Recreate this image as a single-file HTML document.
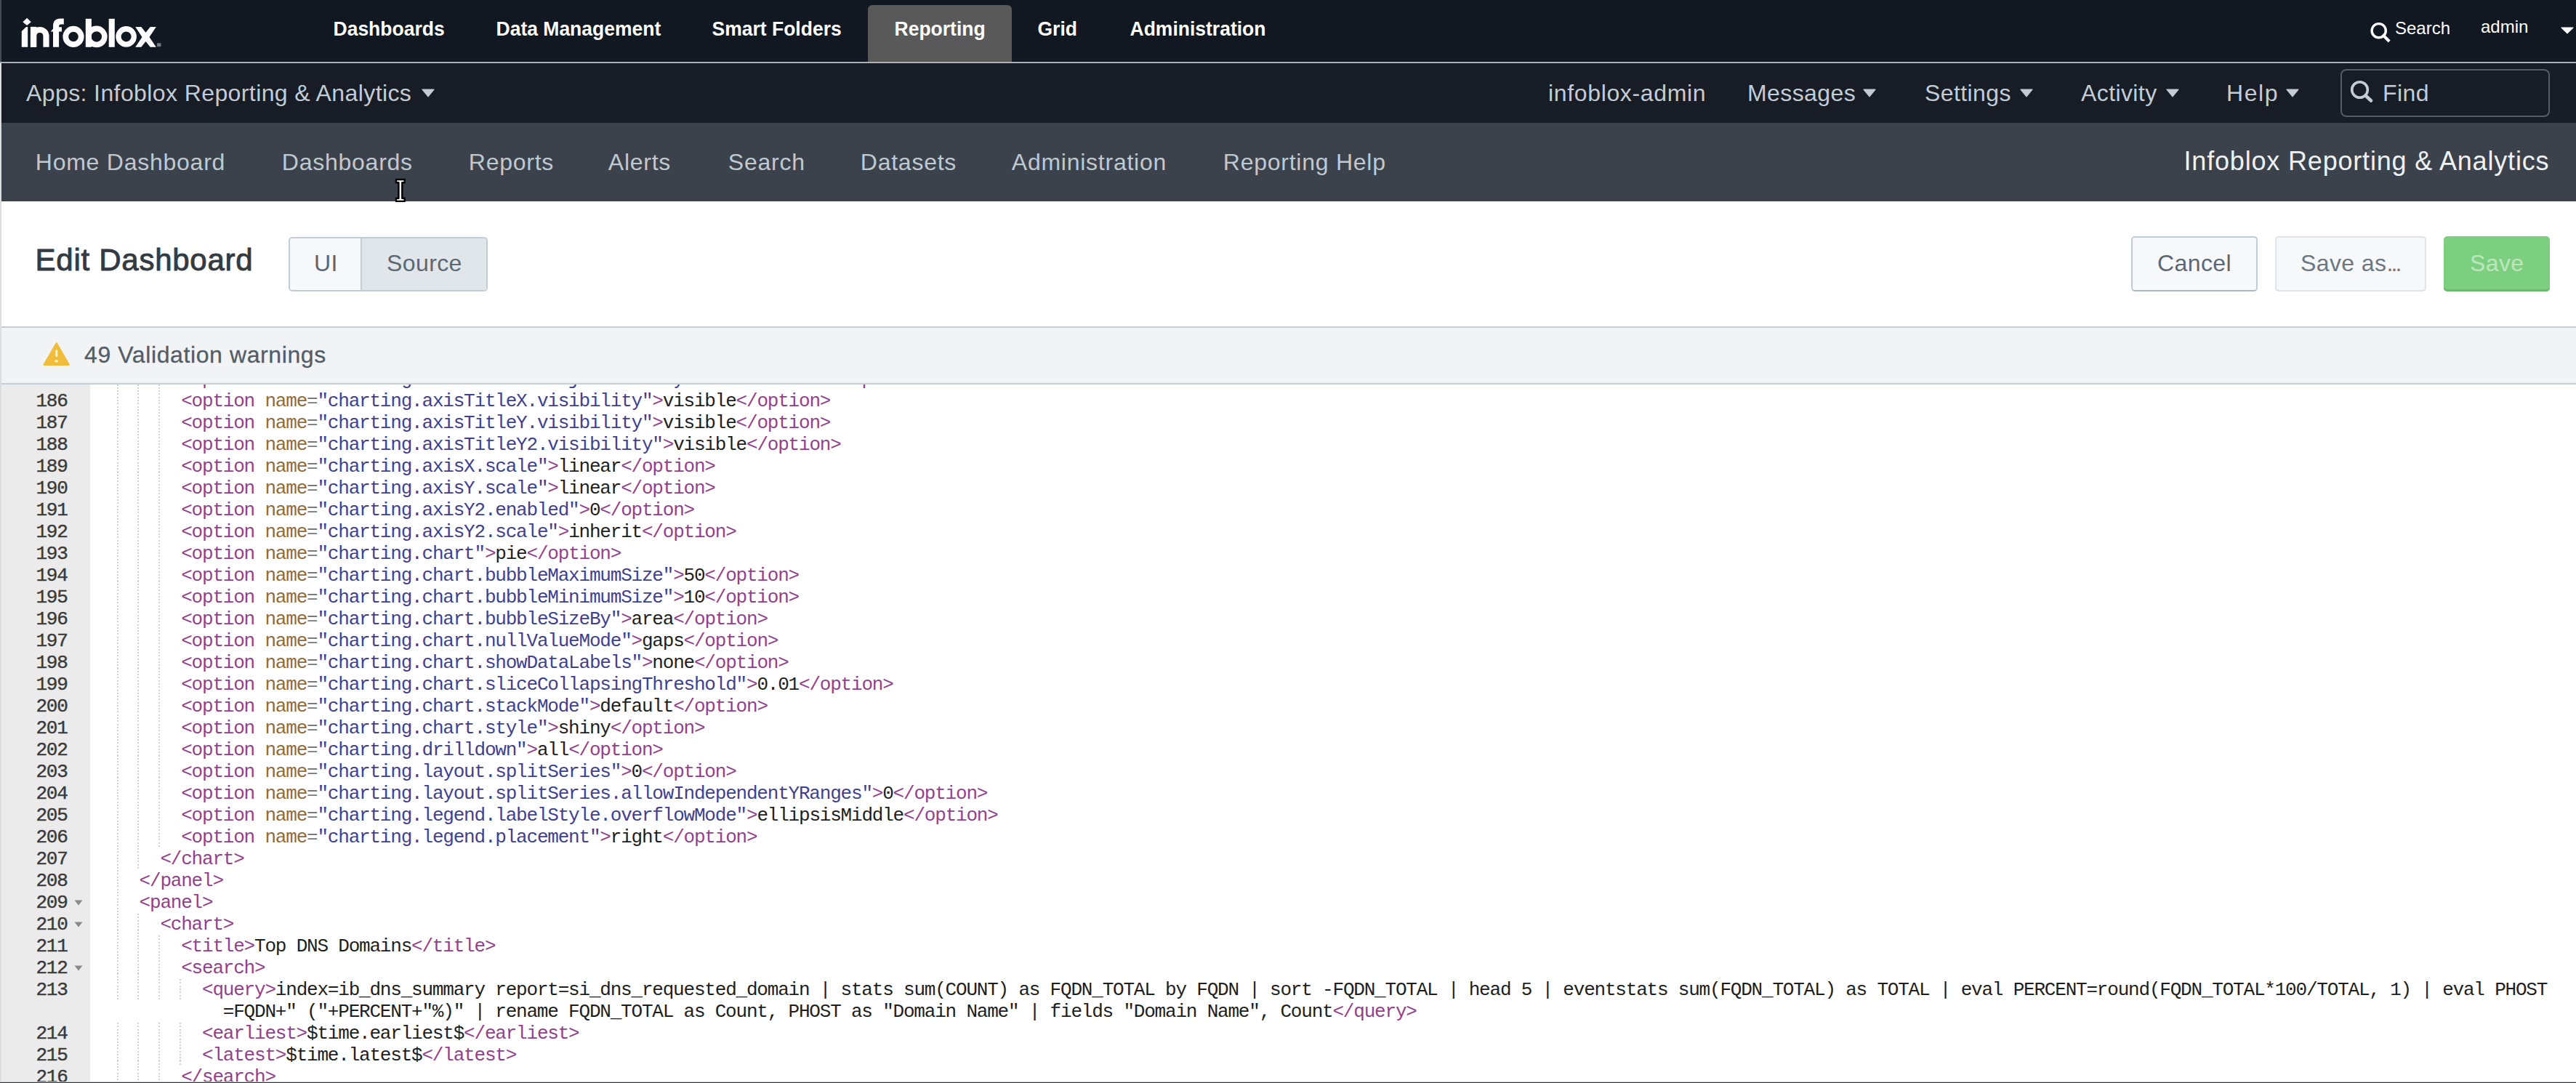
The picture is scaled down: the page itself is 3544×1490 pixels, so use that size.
<!DOCTYPE html>
<html><head><meta charset="utf-8">
<style>
html,body{margin:0;padding:0;}
body{width:3544px;height:1490px;position:relative;overflow:hidden;background:#fff;font-family:"Liberation Sans",sans-serif;}
.a{position:absolute;display:block;}
.t{position:absolute;white-space:pre;line-height:1;}
.g{width:2px;background:repeating-linear-gradient(to bottom,#d3d3d3 0,#d3d3d3 2px,transparent 2px,transparent 4.3px);}
.m{font-family:"Liberation Mono",monospace;}
</style></head><body>
<div class="a" style="left:0;top:0;width:3544px;height:85px;background:#111821"></div>
<div class="a" style="left:0;top:0;width:2px;height:85px;background:#454b52"></div>
<div class="a" style="left:0;top:85px;width:3544px;height:2px;background:#adb0b3"></div>
<div class="a" style="left:1194px;top:7px;width:198px;height:78px;background:#595959;border-radius:6px 6px 0 0"></div>
<div class="t" style="left:458.5px;top:26.57px;font-size:26.5px;color:#ffffff;font-weight:700;letter-spacing:0px;transform:scaleY(1.05);transform-origin:0 22.43px;">Dashboards</div>
<div class="t" style="left:682.5px;top:26.57px;font-size:26.5px;color:#ffffff;font-weight:700;letter-spacing:0px;transform:scaleY(1.05);transform-origin:0 22.43px;">Data Management</div>
<div class="t" style="left:979.5px;top:26.57px;font-size:26.5px;color:#ffffff;font-weight:700;letter-spacing:0px;transform:scaleY(1.05);transform-origin:0 22.43px;">Smart Folders</div>
<div class="t" style="left:1230.5px;top:26.57px;font-size:26.5px;color:#ffffff;font-weight:700;letter-spacing:0px;transform:scaleY(1.05);transform-origin:0 22.43px;">Reporting</div>
<div class="t" style="left:1427.5px;top:26.57px;font-size:26.5px;color:#ffffff;font-weight:700;letter-spacing:0px;transform:scaleY(1.05);transform-origin:0 22.43px;">Grid</div>
<div class="t" style="left:1554.5px;top:26.57px;font-size:26.5px;color:#ffffff;font-weight:700;letter-spacing:0px;transform:scaleY(1.05);transform-origin:0 22.43px;">Administration</div>
<svg class="a" style="left:0;top:0" width="230" height="80" viewBox="0 0 230 80"><g fill="#fcfcfc">
<path d="M37.1 24.8 L42.8 30.2 L37.1 35.0 L31.3 30.2 Z"/>
<path d="M29.8 43.1 L36.0 36.9 L38.2 36.9 L38.2 64.8 L29.8 64.8 Z"/>
<rect x="41.9" y="36.9" width="8.3" height="27.9"/>
<path d="M46.05 64.8 V49.1 A8.75 8.75 0 0 1 63.5 49.1 V64.8" fill="none" stroke="#fcfcfc" stroke-width="8.2"/>
<path d="M73.0 64.8 V36 C73.0 29 76.5 25.5 83 25.5 H87.8 V33.4 H84 C82 33.4 81.1 34.3 81.1 36.5 V64.8 Z"/>
<path d="M70 43.1 L75.2 37.3 L85 37.3 L85 43.6 L70 43.6 Z"/>
<circle cx="101" cy="50.45" r="10.7" fill="none" stroke="#fcfcfc" stroke-width="7.8"/>
<rect x="117.8" y="25.8" width="8.1" height="39"/>
<circle cx="132.8" cy="50.4" r="11.05" fill="none" stroke="#fcfcfc" stroke-width="7.6"/>
<rect x="149.7" y="25.8" width="8.1" height="39"/>
<circle cx="173.6" cy="50.4" r="10.65" fill="none" stroke="#fcfcfc" stroke-width="7.3"/>
<path d="M186.2 37.1 L194.3 37.1 L200.5 44.8 L206.7 37.1 L214.8 37.1 L205.5 50.9 L214.8 64.8 L206.7 64.8 L200.5 57.0 L194.3 64.8 L186.2 64.8 L195.5 50.9 Z"/>
</g><rect x="215.9" y="59.3" width="5.6" height="5" rx="1" fill="#74777b"/></svg>
<svg class="a" style="left:3258px;top:28px" width="34" height="32" viewBox="0 0 34 32"><circle cx="14.7" cy="14.2" r="9.6" fill="none" stroke="#fff" stroke-width="3.4"/><path d="M21.2 21 L27.8 27.6" stroke="#fff" stroke-width="4" stroke-linecap="square"/></svg>
<div class="t" style="left:3295px;top:26.68px;font-size:24px;color:#ffffff;font-weight:400;letter-spacing:0px;">Search</div>
<div class="t" style="left:3413px;top:25.18px;font-size:24px;color:#ffffff;font-weight:400;letter-spacing:0px;">admin</div>
<svg class="a" style="left:3522.5px;top:37px" width="18" height="9.5" viewBox="0 0 18 9.5"><path d="M1 1 L17 1 L9.0 8.8 Z" fill="#ffffff" stroke="#ffffff" stroke-width="1.2" stroke-linejoin="round"/></svg>
<div class="a" style="left:0;top:87px;width:3544px;height:82px;background:#181c24"></div>
<div class="t" style="left:36px;top:111.91px;font-size:32px;color:#c3ccd6;font-weight:400;letter-spacing:0.4px;">Apps: Infoblox Reporting &amp; Analytics</div>
<svg class="a" style="left:579.5px;top:122.3px" width="18" height="11.5" viewBox="0 0 18 11.5"><path d="M1 1 L17 1 L9.0 10.8 Z" fill="#c3ccd6" stroke="#c3ccd6" stroke-width="1.2" stroke-linejoin="round"/></svg>
<div class="t" style="left:2130px;top:111.91px;font-size:32px;color:#c3ccd6;font-weight:400;letter-spacing:0.65px;">infoblox-admin</div>
<div class="t" style="left:2404px;top:111.91px;font-size:32px;color:#c3ccd6;font-weight:400;letter-spacing:0.4px;">Messages</div>
<svg class="a" style="left:2563.3px;top:122.3px" width="18" height="11.5" viewBox="0 0 18 11.5"><path d="M1 1 L17 1 L9.0 10.8 Z" fill="#c3ccd6" stroke="#c3ccd6" stroke-width="1.2" stroke-linejoin="round"/></svg>
<div class="t" style="left:2648px;top:111.91px;font-size:32px;color:#c3ccd6;font-weight:400;letter-spacing:0.4px;">Settings</div>
<svg class="a" style="left:2779.3px;top:122.3px" width="18" height="11.5" viewBox="0 0 18 11.5"><path d="M1 1 L17 1 L9.0 10.8 Z" fill="#c3ccd6" stroke="#c3ccd6" stroke-width="1.2" stroke-linejoin="round"/></svg>
<div class="t" style="left:2863px;top:111.91px;font-size:32px;color:#c3ccd6;font-weight:400;letter-spacing:0.4px;">Activity</div>
<svg class="a" style="left:2980.3px;top:122.3px" width="18" height="11.5" viewBox="0 0 18 11.5"><path d="M1 1 L17 1 L9.0 10.8 Z" fill="#c3ccd6" stroke="#c3ccd6" stroke-width="1.2" stroke-linejoin="round"/></svg>
<div class="t" style="left:3063px;top:111.91px;font-size:32px;color:#c3ccd6;font-weight:400;letter-spacing:1.6px;">Help</div>
<svg class="a" style="left:3145.3px;top:122.3px" width="18" height="11.5" viewBox="0 0 18 11.5"><path d="M1 1 L17 1 L9.0 10.8 Z" fill="#c3ccd6" stroke="#c3ccd6" stroke-width="1.2" stroke-linejoin="round"/></svg>
<div class="a" style="left:3220px;top:95px;width:284px;height:62px;border:2px solid #555c64;border-radius:8px"></div>
<svg class="a" style="left:3230px;top:108px" width="38" height="36" viewBox="0 0 38 36"><circle cx="16.5" cy="15.5" r="10.8" fill="none" stroke="#c3ccd6" stroke-width="3.6"/><path d="M24.5 23.5 L32 30.5" stroke="#c3ccd6" stroke-width="4.6" stroke-linecap="round"/></svg>
<div class="t" style="left:3278px;top:111.91px;font-size:32px;color:#c3ccd6;font-weight:400;letter-spacing:0.4px;">Find</div>
<div class="a" style="left:0;top:169px;width:3544px;height:108px;background:#3c424c"></div>
<div class="t" style="left:48.8px;top:206.91px;font-size:32px;color:#c0c8d0;font-weight:400;letter-spacing:0.75px;">Home Dashboard</div>
<div class="t" style="left:387.8px;top:206.91px;font-size:32px;color:#c0c8d0;font-weight:400;letter-spacing:0.75px;">Dashboards</div>
<div class="t" style="left:644.8px;top:206.91px;font-size:32px;color:#c0c8d0;font-weight:400;letter-spacing:0.75px;">Reports</div>
<div class="t" style="left:836.8px;top:206.91px;font-size:32px;color:#c0c8d0;font-weight:400;letter-spacing:0.75px;">Alerts</div>
<div class="t" style="left:1001.8px;top:206.91px;font-size:32px;color:#c0c8d0;font-weight:400;letter-spacing:0.75px;">Search</div>
<div class="t" style="left:1183.8px;top:206.91px;font-size:32px;color:#c0c8d0;font-weight:400;letter-spacing:0.75px;">Datasets</div>
<div class="t" style="left:1391.8px;top:206.91px;font-size:32px;color:#c0c8d0;font-weight:400;letter-spacing:0.75px;">Administration</div>
<div class="t" style="left:1682.8px;top:206.91px;font-size:32px;color:#c0c8d0;font-weight:400;letter-spacing:0.75px;">Reporting Help</div>
<div class="t" style="left:3004.5px;top:204.03px;font-size:36px;color:#eef1f4;font-weight:400;letter-spacing:0.82px;">Infoblox Reporting &amp; Analytics</div>
<div class="a" style="left:0;top:87px;width:2px;height:1403px;background:#dcdddf;z-index:5"></div>
<div class="t" style="left:48.6px;top:337.45px;font-size:42px;color:#333a42;font-weight:400;letter-spacing:0.73px;-webkit-text-stroke:0.9px #333a42;">Edit Dashboard</div>
<div class="a" style="left:397px;top:326px;width:270px;height:71px;border:2px solid #c3cbd4;border-radius:5px;background:#f7f8fa;overflow:hidden"><div class="a" style="left:97px;top:0;width:2px;height:71px;background:#c3cbd4"></div><div class="a" style="left:99px;top:0;width:171px;height:71px;background:#e1e6eb"></div></div>
<div class="t" style="left:432px;top:345.91px;font-size:32px;color:#5c6773;font-weight:400;letter-spacing:0.4px;">UI</div>
<div class="t" style="left:532px;top:345.91px;font-size:32px;color:#5c6773;font-weight:400;letter-spacing:0.4px;">Source</div>
<div class="a" style="left:2932px;top:325px;width:170px;height:72px;border:2px solid #c3cbd4;border-bottom-color:#aeb8c2;border-radius:5px;background:#f7f8fa"></div>
<div class="t" style="left:2968px;top:345.91px;font-size:32px;color:#5c6773;font-weight:400;letter-spacing:0.4px;">Cancel</div>
<div class="a" style="left:3130px;top:325px;width:204px;height:72px;border:2px solid #dfe4e9;border-radius:5px;background:#f7f8fa"></div>
<div class="t" style="left:3165px;top:345.91px;font-size:32px;color:#6d7782;font-weight:400;letter-spacing:0.4px;">Save as<span style="letter-spacing:-2.8px">...</span></div>
<div class="a" style="left:3362px;top:325px;width:146px;height:76px;border-radius:5px;background:#7dcf80;box-shadow:inset 0 -3px 0 #6cbb70"></div>
<div class="t" style="left:3398px;top:345.91px;font-size:32px;color:#bde6bf;font-weight:400;letter-spacing:0.4px;">Save</div>
<div class="a" style="left:0;top:449px;width:3544px;height:2px;background:#c5cdd6"></div>
<div class="a" style="left:0;top:451px;width:3544px;height:76px;background:#f2f3f5"></div>
<div class="a" style="left:0;top:527px;width:3544px;height:2px;background:#c5cdd6"></div>
<svg class="a" style="left:58px;top:469px" width="40" height="36" viewBox="0 0 40 36"><path d="M19.7 3.4 L36.6 32.7 L2.8 32.7 Z" fill="#f1bc3a" stroke="#f1bc3a" stroke-width="2.4" stroke-linejoin="round"/><rect x="18.3" y="12.3" width="3" height="9.8" rx="1.3" fill="#fdf2c4"/><ellipse cx="19.6" cy="27.8" rx="2.4" ry="1.9" fill="#fdf2c4"/></svg>
<div class="t" style="left:116px;top:472.41px;font-size:32px;color:#535d68;font-weight:400;letter-spacing:0.6px;-webkit-text-stroke:0.3px #535d68;">49 Validation warnings</div>
<div class="a" style="left:0;top:529px;width:3544px;height:961px;overflow:hidden;background:#fff">
<div class="a" style="left:0;top:0;width:124px;height:961px;background:#ebebeb"></div>
<div class="a g" style="left:160.5px;top:-22px;height:30px"></div>
<div class="a g" style="left:189.3px;top:-22px;height:30px"></div>
<div class="a g" style="left:218.1px;top:-22px;height:30px"></div>
<div class="t m" style="left:249.2px;top:-22px;height:30px;line-height:30px;font-size:26px;letter-spacing:-1.2px"><span style="color:#963e8e">&lt;option</span><span style="color:#1e1e1e"> </span><span style="color:#946a38">name</span><span style="color:#7a7a7a">=</span><span style="color:#3f3f94">"charting.axisLabelsX.majorLabelStyle.rotation"</span><span style="color:#963e8e">&gt;</span><span style="color:#1e1e1e">0</span><span style="color:#963e8e">&lt;/option&gt;</span></div>
<div class="t m" style="left:0;top:8px;width:92.7px;text-align:right;height:30px;line-height:30px;font-size:26px;letter-spacing:-1.2px;color:#3a3a3a;-webkit-text-stroke:0.4px #3a3a3a">186</div>
<div class="a g" style="left:160.5px;top:8px;height:30px"></div>
<div class="a g" style="left:189.3px;top:8px;height:30px"></div>
<div class="a g" style="left:218.1px;top:8px;height:30px"></div>
<div class="t m" style="left:249.2px;top:8px;height:30px;line-height:30px;font-size:26px;letter-spacing:-1.2px"><span style="color:#963e8e">&lt;option</span><span style="color:#1e1e1e"> </span><span style="color:#946a38">name</span><span style="color:#7a7a7a">=</span><span style="color:#3f3f94">"charting.axisTitleX.visibility"</span><span style="color:#963e8e">&gt;</span><span style="color:#1e1e1e">visible</span><span style="color:#963e8e">&lt;/option&gt;</span></div>
<div class="t m" style="left:0;top:38px;width:92.7px;text-align:right;height:30px;line-height:30px;font-size:26px;letter-spacing:-1.2px;color:#3a3a3a;-webkit-text-stroke:0.4px #3a3a3a">187</div>
<div class="a g" style="left:160.5px;top:38px;height:30px"></div>
<div class="a g" style="left:189.3px;top:38px;height:30px"></div>
<div class="a g" style="left:218.1px;top:38px;height:30px"></div>
<div class="t m" style="left:249.2px;top:38px;height:30px;line-height:30px;font-size:26px;letter-spacing:-1.2px"><span style="color:#963e8e">&lt;option</span><span style="color:#1e1e1e"> </span><span style="color:#946a38">name</span><span style="color:#7a7a7a">=</span><span style="color:#3f3f94">"charting.axisTitleY.visibility"</span><span style="color:#963e8e">&gt;</span><span style="color:#1e1e1e">visible</span><span style="color:#963e8e">&lt;/option&gt;</span></div>
<div class="t m" style="left:0;top:68px;width:92.7px;text-align:right;height:30px;line-height:30px;font-size:26px;letter-spacing:-1.2px;color:#3a3a3a;-webkit-text-stroke:0.4px #3a3a3a">188</div>
<div class="a g" style="left:160.5px;top:68px;height:30px"></div>
<div class="a g" style="left:189.3px;top:68px;height:30px"></div>
<div class="a g" style="left:218.1px;top:68px;height:30px"></div>
<div class="t m" style="left:249.2px;top:68px;height:30px;line-height:30px;font-size:26px;letter-spacing:-1.2px"><span style="color:#963e8e">&lt;option</span><span style="color:#1e1e1e"> </span><span style="color:#946a38">name</span><span style="color:#7a7a7a">=</span><span style="color:#3f3f94">"charting.axisTitleY2.visibility"</span><span style="color:#963e8e">&gt;</span><span style="color:#1e1e1e">visible</span><span style="color:#963e8e">&lt;/option&gt;</span></div>
<div class="t m" style="left:0;top:98px;width:92.7px;text-align:right;height:30px;line-height:30px;font-size:26px;letter-spacing:-1.2px;color:#3a3a3a;-webkit-text-stroke:0.4px #3a3a3a">189</div>
<div class="a g" style="left:160.5px;top:98px;height:30px"></div>
<div class="a g" style="left:189.3px;top:98px;height:30px"></div>
<div class="a g" style="left:218.1px;top:98px;height:30px"></div>
<div class="t m" style="left:249.2px;top:98px;height:30px;line-height:30px;font-size:26px;letter-spacing:-1.2px"><span style="color:#963e8e">&lt;option</span><span style="color:#1e1e1e"> </span><span style="color:#946a38">name</span><span style="color:#7a7a7a">=</span><span style="color:#3f3f94">"charting.axisX.scale"</span><span style="color:#963e8e">&gt;</span><span style="color:#1e1e1e">linear</span><span style="color:#963e8e">&lt;/option&gt;</span></div>
<div class="t m" style="left:0;top:128px;width:92.7px;text-align:right;height:30px;line-height:30px;font-size:26px;letter-spacing:-1.2px;color:#3a3a3a;-webkit-text-stroke:0.4px #3a3a3a">190</div>
<div class="a g" style="left:160.5px;top:128px;height:30px"></div>
<div class="a g" style="left:189.3px;top:128px;height:30px"></div>
<div class="a g" style="left:218.1px;top:128px;height:30px"></div>
<div class="t m" style="left:249.2px;top:128px;height:30px;line-height:30px;font-size:26px;letter-spacing:-1.2px"><span style="color:#963e8e">&lt;option</span><span style="color:#1e1e1e"> </span><span style="color:#946a38">name</span><span style="color:#7a7a7a">=</span><span style="color:#3f3f94">"charting.axisY.scale"</span><span style="color:#963e8e">&gt;</span><span style="color:#1e1e1e">linear</span><span style="color:#963e8e">&lt;/option&gt;</span></div>
<div class="t m" style="left:0;top:158px;width:92.7px;text-align:right;height:30px;line-height:30px;font-size:26px;letter-spacing:-1.2px;color:#3a3a3a;-webkit-text-stroke:0.4px #3a3a3a">191</div>
<div class="a g" style="left:160.5px;top:158px;height:30px"></div>
<div class="a g" style="left:189.3px;top:158px;height:30px"></div>
<div class="a g" style="left:218.1px;top:158px;height:30px"></div>
<div class="t m" style="left:249.2px;top:158px;height:30px;line-height:30px;font-size:26px;letter-spacing:-1.2px"><span style="color:#963e8e">&lt;option</span><span style="color:#1e1e1e"> </span><span style="color:#946a38">name</span><span style="color:#7a7a7a">=</span><span style="color:#3f3f94">"charting.axisY2.enabled"</span><span style="color:#963e8e">&gt;</span><span style="color:#1e1e1e">0</span><span style="color:#963e8e">&lt;/option&gt;</span></div>
<div class="t m" style="left:0;top:188px;width:92.7px;text-align:right;height:30px;line-height:30px;font-size:26px;letter-spacing:-1.2px;color:#3a3a3a;-webkit-text-stroke:0.4px #3a3a3a">192</div>
<div class="a g" style="left:160.5px;top:188px;height:30px"></div>
<div class="a g" style="left:189.3px;top:188px;height:30px"></div>
<div class="a g" style="left:218.1px;top:188px;height:30px"></div>
<div class="t m" style="left:249.2px;top:188px;height:30px;line-height:30px;font-size:26px;letter-spacing:-1.2px"><span style="color:#963e8e">&lt;option</span><span style="color:#1e1e1e"> </span><span style="color:#946a38">name</span><span style="color:#7a7a7a">=</span><span style="color:#3f3f94">"charting.axisY2.scale"</span><span style="color:#963e8e">&gt;</span><span style="color:#1e1e1e">inherit</span><span style="color:#963e8e">&lt;/option&gt;</span></div>
<div class="t m" style="left:0;top:218px;width:92.7px;text-align:right;height:30px;line-height:30px;font-size:26px;letter-spacing:-1.2px;color:#3a3a3a;-webkit-text-stroke:0.4px #3a3a3a">193</div>
<div class="a g" style="left:160.5px;top:218px;height:30px"></div>
<div class="a g" style="left:189.3px;top:218px;height:30px"></div>
<div class="a g" style="left:218.1px;top:218px;height:30px"></div>
<div class="t m" style="left:249.2px;top:218px;height:30px;line-height:30px;font-size:26px;letter-spacing:-1.2px"><span style="color:#963e8e">&lt;option</span><span style="color:#1e1e1e"> </span><span style="color:#946a38">name</span><span style="color:#7a7a7a">=</span><span style="color:#3f3f94">"charting.chart"</span><span style="color:#963e8e">&gt;</span><span style="color:#1e1e1e">pie</span><span style="color:#963e8e">&lt;/option&gt;</span></div>
<div class="t m" style="left:0;top:248px;width:92.7px;text-align:right;height:30px;line-height:30px;font-size:26px;letter-spacing:-1.2px;color:#3a3a3a;-webkit-text-stroke:0.4px #3a3a3a">194</div>
<div class="a g" style="left:160.5px;top:248px;height:30px"></div>
<div class="a g" style="left:189.3px;top:248px;height:30px"></div>
<div class="a g" style="left:218.1px;top:248px;height:30px"></div>
<div class="t m" style="left:249.2px;top:248px;height:30px;line-height:30px;font-size:26px;letter-spacing:-1.2px"><span style="color:#963e8e">&lt;option</span><span style="color:#1e1e1e"> </span><span style="color:#946a38">name</span><span style="color:#7a7a7a">=</span><span style="color:#3f3f94">"charting.chart.bubbleMaximumSize"</span><span style="color:#963e8e">&gt;</span><span style="color:#1e1e1e">50</span><span style="color:#963e8e">&lt;/option&gt;</span></div>
<div class="t m" style="left:0;top:278px;width:92.7px;text-align:right;height:30px;line-height:30px;font-size:26px;letter-spacing:-1.2px;color:#3a3a3a;-webkit-text-stroke:0.4px #3a3a3a">195</div>
<div class="a g" style="left:160.5px;top:278px;height:30px"></div>
<div class="a g" style="left:189.3px;top:278px;height:30px"></div>
<div class="a g" style="left:218.1px;top:278px;height:30px"></div>
<div class="t m" style="left:249.2px;top:278px;height:30px;line-height:30px;font-size:26px;letter-spacing:-1.2px"><span style="color:#963e8e">&lt;option</span><span style="color:#1e1e1e"> </span><span style="color:#946a38">name</span><span style="color:#7a7a7a">=</span><span style="color:#3f3f94">"charting.chart.bubbleMinimumSize"</span><span style="color:#963e8e">&gt;</span><span style="color:#1e1e1e">10</span><span style="color:#963e8e">&lt;/option&gt;</span></div>
<div class="t m" style="left:0;top:308px;width:92.7px;text-align:right;height:30px;line-height:30px;font-size:26px;letter-spacing:-1.2px;color:#3a3a3a;-webkit-text-stroke:0.4px #3a3a3a">196</div>
<div class="a g" style="left:160.5px;top:308px;height:30px"></div>
<div class="a g" style="left:189.3px;top:308px;height:30px"></div>
<div class="a g" style="left:218.1px;top:308px;height:30px"></div>
<div class="t m" style="left:249.2px;top:308px;height:30px;line-height:30px;font-size:26px;letter-spacing:-1.2px"><span style="color:#963e8e">&lt;option</span><span style="color:#1e1e1e"> </span><span style="color:#946a38">name</span><span style="color:#7a7a7a">=</span><span style="color:#3f3f94">"charting.chart.bubbleSizeBy"</span><span style="color:#963e8e">&gt;</span><span style="color:#1e1e1e">area</span><span style="color:#963e8e">&lt;/option&gt;</span></div>
<div class="t m" style="left:0;top:338px;width:92.7px;text-align:right;height:30px;line-height:30px;font-size:26px;letter-spacing:-1.2px;color:#3a3a3a;-webkit-text-stroke:0.4px #3a3a3a">197</div>
<div class="a g" style="left:160.5px;top:338px;height:30px"></div>
<div class="a g" style="left:189.3px;top:338px;height:30px"></div>
<div class="a g" style="left:218.1px;top:338px;height:30px"></div>
<div class="t m" style="left:249.2px;top:338px;height:30px;line-height:30px;font-size:26px;letter-spacing:-1.2px"><span style="color:#963e8e">&lt;option</span><span style="color:#1e1e1e"> </span><span style="color:#946a38">name</span><span style="color:#7a7a7a">=</span><span style="color:#3f3f94">"charting.chart.nullValueMode"</span><span style="color:#963e8e">&gt;</span><span style="color:#1e1e1e">gaps</span><span style="color:#963e8e">&lt;/option&gt;</span></div>
<div class="t m" style="left:0;top:368px;width:92.7px;text-align:right;height:30px;line-height:30px;font-size:26px;letter-spacing:-1.2px;color:#3a3a3a;-webkit-text-stroke:0.4px #3a3a3a">198</div>
<div class="a g" style="left:160.5px;top:368px;height:30px"></div>
<div class="a g" style="left:189.3px;top:368px;height:30px"></div>
<div class="a g" style="left:218.1px;top:368px;height:30px"></div>
<div class="t m" style="left:249.2px;top:368px;height:30px;line-height:30px;font-size:26px;letter-spacing:-1.2px"><span style="color:#963e8e">&lt;option</span><span style="color:#1e1e1e"> </span><span style="color:#946a38">name</span><span style="color:#7a7a7a">=</span><span style="color:#3f3f94">"charting.chart.showDataLabels"</span><span style="color:#963e8e">&gt;</span><span style="color:#1e1e1e">none</span><span style="color:#963e8e">&lt;/option&gt;</span></div>
<div class="t m" style="left:0;top:398px;width:92.7px;text-align:right;height:30px;line-height:30px;font-size:26px;letter-spacing:-1.2px;color:#3a3a3a;-webkit-text-stroke:0.4px #3a3a3a">199</div>
<div class="a g" style="left:160.5px;top:398px;height:30px"></div>
<div class="a g" style="left:189.3px;top:398px;height:30px"></div>
<div class="a g" style="left:218.1px;top:398px;height:30px"></div>
<div class="t m" style="left:249.2px;top:398px;height:30px;line-height:30px;font-size:26px;letter-spacing:-1.2px"><span style="color:#963e8e">&lt;option</span><span style="color:#1e1e1e"> </span><span style="color:#946a38">name</span><span style="color:#7a7a7a">=</span><span style="color:#3f3f94">"charting.chart.sliceCollapsingThreshold"</span><span style="color:#963e8e">&gt;</span><span style="color:#1e1e1e">0.01</span><span style="color:#963e8e">&lt;/option&gt;</span></div>
<div class="t m" style="left:0;top:428px;width:92.7px;text-align:right;height:30px;line-height:30px;font-size:26px;letter-spacing:-1.2px;color:#3a3a3a;-webkit-text-stroke:0.4px #3a3a3a">200</div>
<div class="a g" style="left:160.5px;top:428px;height:30px"></div>
<div class="a g" style="left:189.3px;top:428px;height:30px"></div>
<div class="a g" style="left:218.1px;top:428px;height:30px"></div>
<div class="t m" style="left:249.2px;top:428px;height:30px;line-height:30px;font-size:26px;letter-spacing:-1.2px"><span style="color:#963e8e">&lt;option</span><span style="color:#1e1e1e"> </span><span style="color:#946a38">name</span><span style="color:#7a7a7a">=</span><span style="color:#3f3f94">"charting.chart.stackMode"</span><span style="color:#963e8e">&gt;</span><span style="color:#1e1e1e">default</span><span style="color:#963e8e">&lt;/option&gt;</span></div>
<div class="t m" style="left:0;top:458px;width:92.7px;text-align:right;height:30px;line-height:30px;font-size:26px;letter-spacing:-1.2px;color:#3a3a3a;-webkit-text-stroke:0.4px #3a3a3a">201</div>
<div class="a g" style="left:160.5px;top:458px;height:30px"></div>
<div class="a g" style="left:189.3px;top:458px;height:30px"></div>
<div class="a g" style="left:218.1px;top:458px;height:30px"></div>
<div class="t m" style="left:249.2px;top:458px;height:30px;line-height:30px;font-size:26px;letter-spacing:-1.2px"><span style="color:#963e8e">&lt;option</span><span style="color:#1e1e1e"> </span><span style="color:#946a38">name</span><span style="color:#7a7a7a">=</span><span style="color:#3f3f94">"charting.chart.style"</span><span style="color:#963e8e">&gt;</span><span style="color:#1e1e1e">shiny</span><span style="color:#963e8e">&lt;/option&gt;</span></div>
<div class="t m" style="left:0;top:488px;width:92.7px;text-align:right;height:30px;line-height:30px;font-size:26px;letter-spacing:-1.2px;color:#3a3a3a;-webkit-text-stroke:0.4px #3a3a3a">202</div>
<div class="a g" style="left:160.5px;top:488px;height:30px"></div>
<div class="a g" style="left:189.3px;top:488px;height:30px"></div>
<div class="a g" style="left:218.1px;top:488px;height:30px"></div>
<div class="t m" style="left:249.2px;top:488px;height:30px;line-height:30px;font-size:26px;letter-spacing:-1.2px"><span style="color:#963e8e">&lt;option</span><span style="color:#1e1e1e"> </span><span style="color:#946a38">name</span><span style="color:#7a7a7a">=</span><span style="color:#3f3f94">"charting.drilldown"</span><span style="color:#963e8e">&gt;</span><span style="color:#1e1e1e">all</span><span style="color:#963e8e">&lt;/option&gt;</span></div>
<div class="t m" style="left:0;top:518px;width:92.7px;text-align:right;height:30px;line-height:30px;font-size:26px;letter-spacing:-1.2px;color:#3a3a3a;-webkit-text-stroke:0.4px #3a3a3a">203</div>
<div class="a g" style="left:160.5px;top:518px;height:30px"></div>
<div class="a g" style="left:189.3px;top:518px;height:30px"></div>
<div class="a g" style="left:218.1px;top:518px;height:30px"></div>
<div class="t m" style="left:249.2px;top:518px;height:30px;line-height:30px;font-size:26px;letter-spacing:-1.2px"><span style="color:#963e8e">&lt;option</span><span style="color:#1e1e1e"> </span><span style="color:#946a38">name</span><span style="color:#7a7a7a">=</span><span style="color:#3f3f94">"charting.layout.splitSeries"</span><span style="color:#963e8e">&gt;</span><span style="color:#1e1e1e">0</span><span style="color:#963e8e">&lt;/option&gt;</span></div>
<div class="t m" style="left:0;top:548px;width:92.7px;text-align:right;height:30px;line-height:30px;font-size:26px;letter-spacing:-1.2px;color:#3a3a3a;-webkit-text-stroke:0.4px #3a3a3a">204</div>
<div class="a g" style="left:160.5px;top:548px;height:30px"></div>
<div class="a g" style="left:189.3px;top:548px;height:30px"></div>
<div class="a g" style="left:218.1px;top:548px;height:30px"></div>
<div class="t m" style="left:249.2px;top:548px;height:30px;line-height:30px;font-size:26px;letter-spacing:-1.2px"><span style="color:#963e8e">&lt;option</span><span style="color:#1e1e1e"> </span><span style="color:#946a38">name</span><span style="color:#7a7a7a">=</span><span style="color:#3f3f94">"charting.layout.splitSeries.allowIndependentYRanges"</span><span style="color:#963e8e">&gt;</span><span style="color:#1e1e1e">0</span><span style="color:#963e8e">&lt;/option&gt;</span></div>
<div class="t m" style="left:0;top:578px;width:92.7px;text-align:right;height:30px;line-height:30px;font-size:26px;letter-spacing:-1.2px;color:#3a3a3a;-webkit-text-stroke:0.4px #3a3a3a">205</div>
<div class="a g" style="left:160.5px;top:578px;height:30px"></div>
<div class="a g" style="left:189.3px;top:578px;height:30px"></div>
<div class="a g" style="left:218.1px;top:578px;height:30px"></div>
<div class="t m" style="left:249.2px;top:578px;height:30px;line-height:30px;font-size:26px;letter-spacing:-1.2px"><span style="color:#963e8e">&lt;option</span><span style="color:#1e1e1e"> </span><span style="color:#946a38">name</span><span style="color:#7a7a7a">=</span><span style="color:#3f3f94">"charting.legend.labelStyle.overflowMode"</span><span style="color:#963e8e">&gt;</span><span style="color:#1e1e1e">ellipsisMiddle</span><span style="color:#963e8e">&lt;/option&gt;</span></div>
<div class="t m" style="left:0;top:608px;width:92.7px;text-align:right;height:30px;line-height:30px;font-size:26px;letter-spacing:-1.2px;color:#3a3a3a;-webkit-text-stroke:0.4px #3a3a3a">206</div>
<div class="a g" style="left:160.5px;top:608px;height:30px"></div>
<div class="a g" style="left:189.3px;top:608px;height:30px"></div>
<div class="a g" style="left:218.1px;top:608px;height:30px"></div>
<div class="t m" style="left:249.2px;top:608px;height:30px;line-height:30px;font-size:26px;letter-spacing:-1.2px"><span style="color:#963e8e">&lt;option</span><span style="color:#1e1e1e"> </span><span style="color:#946a38">name</span><span style="color:#7a7a7a">=</span><span style="color:#3f3f94">"charting.legend.placement"</span><span style="color:#963e8e">&gt;</span><span style="color:#1e1e1e">right</span><span style="color:#963e8e">&lt;/option&gt;</span></div>
<div class="t m" style="left:0;top:638px;width:92.7px;text-align:right;height:30px;line-height:30px;font-size:26px;letter-spacing:-1.2px;color:#3a3a3a;-webkit-text-stroke:0.4px #3a3a3a">207</div>
<div class="a g" style="left:160.5px;top:638px;height:30px"></div>
<div class="a g" style="left:189.3px;top:638px;height:30px"></div>
<div class="t m" style="left:220.4px;top:638px;height:30px;line-height:30px;font-size:26px;letter-spacing:-1.2px"><span style="color:#963e8e">&lt;/chart&gt;</span></div>
<div class="t m" style="left:0;top:668px;width:92.7px;text-align:right;height:30px;line-height:30px;font-size:26px;letter-spacing:-1.2px;color:#3a3a3a;-webkit-text-stroke:0.4px #3a3a3a">208</div>
<div class="a g" style="left:160.5px;top:668px;height:30px"></div>
<div class="t m" style="left:191.6px;top:668px;height:30px;line-height:30px;font-size:26px;letter-spacing:-1.2px"><span style="color:#963e8e">&lt;/panel&gt;</span></div>
<div class="t m" style="left:0;top:698px;width:92.7px;text-align:right;height:30px;line-height:30px;font-size:26px;letter-spacing:-1.2px;color:#3a3a3a;-webkit-text-stroke:0.4px #3a3a3a">209</div>
<svg class="a" style="left:102px;top:709px" width="12" height="8" viewBox="0 0 12 8"><path d="M0.5 0.5 L11.5 0.5 L6 7.5 Z" fill="#8a8a8a"/></svg>
<div class="a g" style="left:160.5px;top:698px;height:30px"></div>
<div class="t m" style="left:191.6px;top:698px;height:30px;line-height:30px;font-size:26px;letter-spacing:-1.2px"><span style="color:#963e8e">&lt;panel&gt;</span></div>
<div class="t m" style="left:0;top:728px;width:92.7px;text-align:right;height:30px;line-height:30px;font-size:26px;letter-spacing:-1.2px;color:#3a3a3a;-webkit-text-stroke:0.4px #3a3a3a">210</div>
<svg class="a" style="left:102px;top:739px" width="12" height="8" viewBox="0 0 12 8"><path d="M0.5 0.5 L11.5 0.5 L6 7.5 Z" fill="#8a8a8a"/></svg>
<div class="a g" style="left:160.5px;top:728px;height:30px"></div>
<div class="a g" style="left:189.3px;top:728px;height:30px"></div>
<div class="t m" style="left:220.4px;top:728px;height:30px;line-height:30px;font-size:26px;letter-spacing:-1.2px"><span style="color:#963e8e">&lt;chart&gt;</span></div>
<div class="t m" style="left:0;top:758px;width:92.7px;text-align:right;height:30px;line-height:30px;font-size:26px;letter-spacing:-1.2px;color:#3a3a3a;-webkit-text-stroke:0.4px #3a3a3a">211</div>
<div class="a g" style="left:160.5px;top:758px;height:30px"></div>
<div class="a g" style="left:189.3px;top:758px;height:30px"></div>
<div class="a g" style="left:218.1px;top:758px;height:30px"></div>
<div class="t m" style="left:249.2px;top:758px;height:30px;line-height:30px;font-size:26px;letter-spacing:-1.2px"><span style="color:#963e8e">&lt;title&gt;</span><span style="color:#1e1e1e">Top DNS Domains</span><span style="color:#963e8e">&lt;/title&gt;</span></div>
<div class="t m" style="left:0;top:788px;width:92.7px;text-align:right;height:30px;line-height:30px;font-size:26px;letter-spacing:-1.2px;color:#3a3a3a;-webkit-text-stroke:0.4px #3a3a3a">212</div>
<svg class="a" style="left:102px;top:799px" width="12" height="8" viewBox="0 0 12 8"><path d="M0.5 0.5 L11.5 0.5 L6 7.5 Z" fill="#8a8a8a"/></svg>
<div class="a g" style="left:160.5px;top:788px;height:30px"></div>
<div class="a g" style="left:189.3px;top:788px;height:30px"></div>
<div class="a g" style="left:218.1px;top:788px;height:30px"></div>
<div class="t m" style="left:249.2px;top:788px;height:30px;line-height:30px;font-size:26px;letter-spacing:-1.2px"><span style="color:#963e8e">&lt;search&gt;</span></div>
<div class="t m" style="left:0;top:818px;width:92.7px;text-align:right;height:30px;line-height:30px;font-size:26px;letter-spacing:-1.2px;color:#3a3a3a;-webkit-text-stroke:0.4px #3a3a3a">213</div>
<div class="a g" style="left:160.5px;top:818px;height:30px"></div>
<div class="a g" style="left:189.3px;top:818px;height:30px"></div>
<div class="a g" style="left:218.1px;top:818px;height:30px"></div>
<div class="a g" style="left:246.9px;top:818px;height:30px"></div>
<div class="t m" style="left:278.0px;top:818px;height:30px;line-height:30px;font-size:26px;letter-spacing:-1.2px"><span style="color:#963e8e">&lt;query&gt;</span><span style="color:#1e1e1e">index=ib_dns_summary report=si_dns_requested_domain | stats sum(COUNT) as FQDN_TOTAL by FQDN | sort -FQDN_TOTAL | head 5 | eventstats sum(FQDN_TOTAL) as TOTAL | eval PERCENT=round(FQDN_TOTAL*100/TOTAL, 1) | eval PHOST</span></div>
<div class="t m" style="left:306.8px;top:848px;height:30px;line-height:30px;font-size:26px;letter-spacing:-1.2px"><span style="color:#1e1e1e">=FQDN+" ("+PERCENT+"%)" | rename FQDN_TOTAL as Count, PHOST as "Domain Name" | fields "Domain Name", Count</span><span style="color:#963e8e">&lt;/query&gt;</span></div>
<div class="t m" style="left:0;top:878px;width:92.7px;text-align:right;height:30px;line-height:30px;font-size:26px;letter-spacing:-1.2px;color:#3a3a3a;-webkit-text-stroke:0.4px #3a3a3a">214</div>
<div class="a g" style="left:160.5px;top:878px;height:30px"></div>
<div class="a g" style="left:189.3px;top:878px;height:30px"></div>
<div class="a g" style="left:218.1px;top:878px;height:30px"></div>
<div class="a g" style="left:246.9px;top:878px;height:30px"></div>
<div class="t m" style="left:278.0px;top:878px;height:30px;line-height:30px;font-size:26px;letter-spacing:-1.2px"><span style="color:#963e8e">&lt;earliest&gt;</span><span style="color:#1e1e1e">$time.earliest$</span><span style="color:#963e8e">&lt;/earliest&gt;</span></div>
<div class="t m" style="left:0;top:908px;width:92.7px;text-align:right;height:30px;line-height:30px;font-size:26px;letter-spacing:-1.2px;color:#3a3a3a;-webkit-text-stroke:0.4px #3a3a3a">215</div>
<div class="a g" style="left:160.5px;top:908px;height:30px"></div>
<div class="a g" style="left:189.3px;top:908px;height:30px"></div>
<div class="a g" style="left:218.1px;top:908px;height:30px"></div>
<div class="a g" style="left:246.9px;top:908px;height:30px"></div>
<div class="t m" style="left:278.0px;top:908px;height:30px;line-height:30px;font-size:26px;letter-spacing:-1.2px"><span style="color:#963e8e">&lt;latest&gt;</span><span style="color:#1e1e1e">$time.latest$</span><span style="color:#963e8e">&lt;/latest&gt;</span></div>
<div class="t m" style="left:0;top:938px;width:92.7px;text-align:right;height:30px;line-height:30px;font-size:26px;letter-spacing:-1.2px;color:#3a3a3a;-webkit-text-stroke:0.4px #3a3a3a">216</div>
<div class="a g" style="left:160.5px;top:938px;height:30px"></div>
<div class="a g" style="left:189.3px;top:938px;height:30px"></div>
<div class="a g" style="left:218.1px;top:938px;height:30px"></div>
<div class="t m" style="left:249.2px;top:938px;height:30px;line-height:30px;font-size:26px;letter-spacing:-1.2px"><span style="color:#963e8e">&lt;/search&gt;</span></div>
</div>
<svg class="a" style="left:543px;top:245px;z-index:20" width="16" height="34" viewBox="0 0 16 34"><path d="M2 2 H13.7 V6.2 H10.3 V27.7 H13.7 V31.9 H2 V27.7 H5.4 V6.2 H2 Z" fill="#fff" stroke="#000" stroke-width="2.4" stroke-linejoin="round"/></svg>
<div class="a" style="left:0;top:1488px;width:3544px;height:1px;background:#c9cacb;z-index:6"></div><div class="a" style="left:0;top:1489px;width:3544px;height:1px;background:#3a3d40;z-index:6"></div>
</body></html>
